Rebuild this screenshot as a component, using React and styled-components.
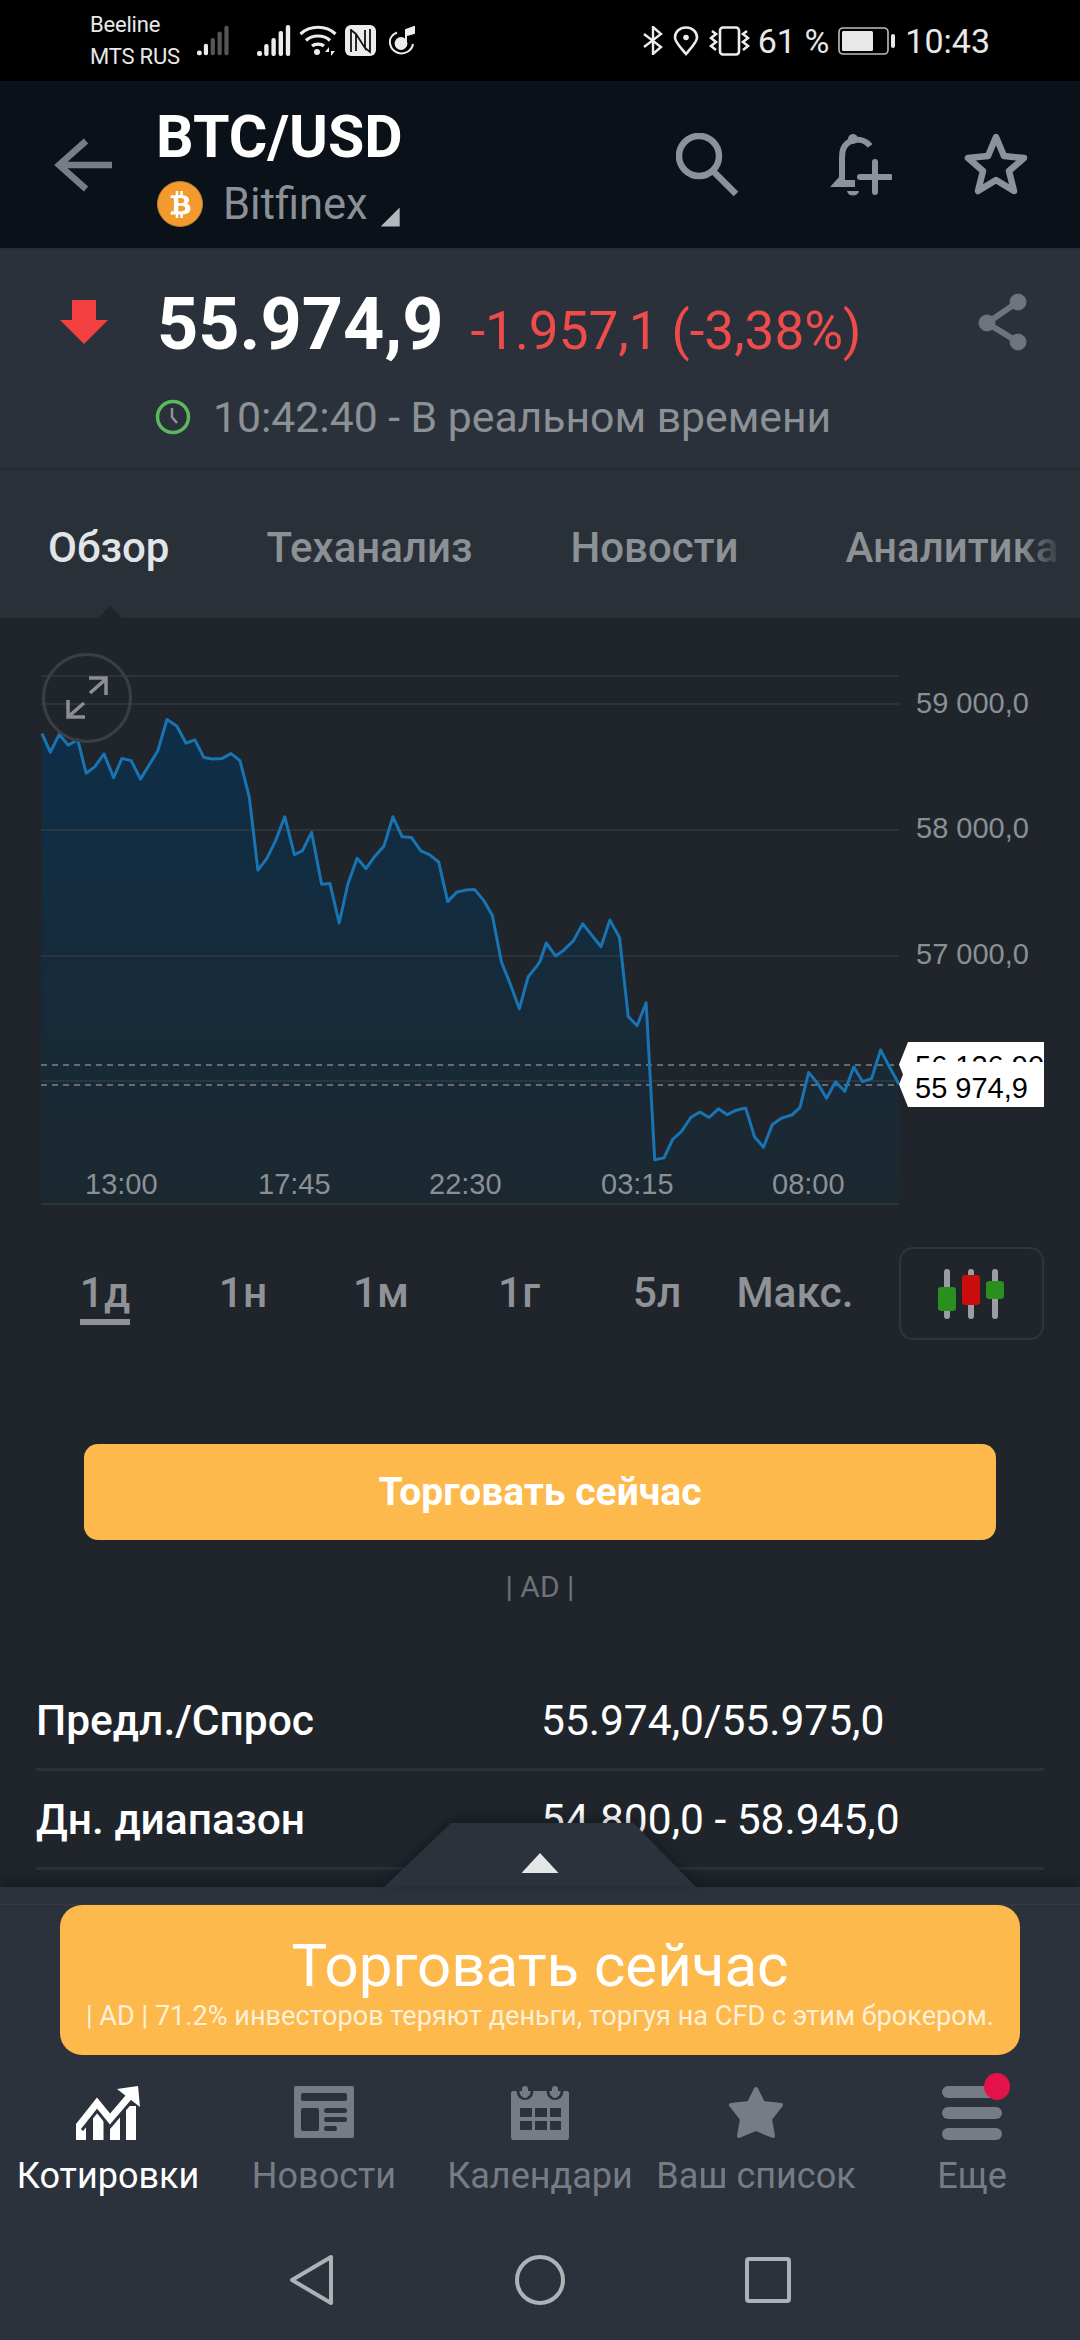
import React from 'react';
import styled, { createGlobalStyle } from 'styled-components';
import { FaBtc } from 'react-icons/fa';

const GlobalStyle = createGlobalStyle`
  html, body {
    margin: 0;
    padding: 0;
    background: #1f252b;
  }
  * {
    box-sizing: border-box;
  }
`;

const Page = styled.div`
  width: 1080px;
  height: 2340px;
  display: flex;
  flex-direction: column;
  overflow: hidden;
  font-family: Roboto, 'Noto Sans', sans-serif;
  background: #1f252b;
`;

/* status bar */
const StatusBar = styled.div`
  height: 81px;
  flex: none;
  display: flex;
  align-items: center;
  padding: 0 90px;
  background: #000;
  color: #e8e8e8;
`;

const Carriers = styled.div`
  width: 113px;
  font-size: 22px;
  line-height: 32px;
  letter-spacing: -0.2px;
`;

const StatusIcons = styled.div`
  display: flex;
  align-items: center;
  gap: ${(p) => p.$gap || 8}px;
  margin-left: ${(p) => p.$left || 0}px;
`;

const StatusText = styled.span`
  font-size: 34px;
  line-height: 40px;
  white-space: pre;
`;

const NoteSlot = styled.div`
  display: flex;
  margin-left: 5px;
`;

/* header */
const Header = styled.div`
  height: 169px;
  flex: none;
  display: flex;
  align-items: flex-start;
  background: #0b1118;
  border-bottom: 2px solid #262c34;
`;

const BackSlot = styled.div`
  width: 156px;
  padding: 56px 0 0 54px;
  flex: none;
`;

const TitleBlock = styled.div`
  width: 520px;
  flex: none;
  padding-top: 28px;
`;

const Title = styled.div`
  font-size: 59px;
  line-height: 56px;
  font-weight: 700;
  color: #fff;
`;

const SourceRow = styled.div`
  display: flex;
  align-items: center;
  height: 50px;
  margin-top: 14px;
  color: #8a9096;
  font-size: 43.5px;
`;

const Coin = styled.div`
  width: 46px;
  height: 46px;
  border-radius: 50%;
  display: flex;
  align-items: center;
  justify-content: center;
  margin: 0 20px 0 1px;
  background: #f29a2e;
  border: 1px solid #b8803e;
  color: #fff;
  font-size: 27px;
`;

const SourceCorner = styled.div`
  width: 19px;
  height: 19px;
  margin: 26px 0 0 13px;
  background: #b4b8bc;
  clip-path: polygon(100% 0, 100% 100%, 0 100%);
`;

const HeaderAction = styled.div`
  margin: 52px 0 0 ${(p) => p.$left || 0}px;
  flex: none;
  display: flex;
`;

/* quote */
const Quote = styled.div`
  height: 220px;
  flex: none;
  padding: 39px 50px 0 60px;
  background: #2b313a;
  border-bottom: 2px solid #262b33;
`;

const PriceRow = styled.div`
  display: flex;
  align-items: baseline;
`;

const DownArrow = styled.svg`
  align-self: flex-start;
  margin: 11px 49px 0 0;
  flex: none;
`;

const Price = styled.span`
  font-size: 72px;
  line-height: 72px;
  font-weight: 700;
  color: #fff;
`;

const Change = styled.span`
  margin-left: 27px;
  font-size: 53px;
  line-height: 72px;
  color: #ef4b4b;
`;

const ShareIcon = styled.svg`
  align-self: flex-start;
  margin: 4px 0 0 auto;
  flex: none;
`;

const TimeRow = styled.div`
  display: flex;
  align-items: center;
  margin: 25px 0 0 95px;
  height: 50px;
  gap: 22px;
  color: #8c9196;
  font-size: 42.7px;
`;

/* tabs */
const Tabs = styled.div`
  position: relative;
  height: 148px;
  flex: none;
  display: flex;
  align-items: center;
  padding: 6px 0 0 48px;
  overflow: hidden;
  white-space: nowrap;
  background: #2a3038;
`;

const Tab = styled.div`
  flex: none;
  margin-right: ${(p) => p.$gap}px;
  font-size: 42px;
  font-weight: 500;
  color: ${(p) => (p.$active ? '#e2e5e8' : '#8c9196')};
`;

const TabFade = styled.div`
  position: absolute;
  top: 0;
  bottom: 0;
  right: 0;
  width: 60px;
  background: linear-gradient(to right, rgba(42, 48, 56, 0), #2a3038 75%);
`;

const TabCaret = styled.div`
  position: absolute;
  left: 98px;
  bottom: 0;
  width: 24px;
  height: 12px;
  background: #1f252b;
  clip-path: polygon(50% 0, 100% 100%, 0 100%);
`;

/* scrolling content */
const Content = styled.div`
  flex: 1;
  min-height: 0;
  overflow: hidden;
`;

const Chart = styled.div`
  position: relative;
  width: 1080px;
  height: 602px;
`;

const ChartSvg = styled.svg`
  display: block;
`;

const ExpandButton = styled.div`
  position: absolute;
  left: 42px;
  top: 35px;
  width: 90px;
  height: 90px;
  border: 3px solid #3b3f44;
  border-radius: 50%;
  display: flex;
  align-items: center;
  justify-content: center;
`;

const AxisLabel = styled.span`
  position: absolute;
  left: ${(p) => p.$x}px;
  top: ${(p) => p.$y}px;
  font-family: 'Liberation Sans', Arial, sans-serif;
  font-size: 29px;
  line-height: 34px;
  color: #8b9095;
`;

const PriceTag = styled.div`
  position: absolute;
  left: 899px;
  top: ${(p) => p.$y}px;
  width: 145px;
  height: 45px;
  padding-left: 16px;
  overflow: hidden;
  white-space: nowrap;
  font-family: 'Liberation Sans', Arial, sans-serif;
  font-size: 29px;
  line-height: ${(p) => p.$line}px;
  color: #000;
  background: #fff;
  clip-path: polygon(0 50%, 9px 0, 100% 0, 100% 100%, 9px 100%);
`;

const RangeRow = styled.div`
  display: flex;
  align-items: center;
  height: 93px;
  margin-top: 27px;
  padding-left: 36px;
`;

const RangeItem = styled.div`
  width: 138px;
  flex: none;
  display: flex;
  justify-content: center;
  padding-top: 6px;
  font-size: 42.5px;
  font-weight: 500;
  color: #8f9397;
`;

const RangeLabel = styled.span`
  padding-bottom: 2px;
  border-bottom: 6px solid ${(p) => (p.$active ? '#8f9397' : 'transparent')};
`;

const CandleButton = styled.div`
  width: 145px;
  height: 93px;
  margin-left: 35px;
  flex: none;
  display: flex;
  align-items: center;
  justify-content: center;
  border: 2px solid #2e353d;
  border-radius: 14px;
`;

const TradeButton = styled.div`
  height: 96px;
  margin: 104px 84px 0;
  display: flex;
  align-items: center;
  justify-content: center;
  border-radius: 14px;
  background: #fdb94b;
  color: #fff;
  font-size: 39px;
  font-weight: 700;
`;

const AdLabel = styled.div`
  margin-top: 30px;
  text-align: center;
  font-size: 30px;
  line-height: 34px;
  color: #6c7278;
`;

const InfoList = styled.div`
  margin: 68px 36px 0;
`;

const InfoRow = styled.div`
  display: flex;
  align-items: center;
  height: 99px;
  border-bottom: 3px solid #2b3238;
  font-size: 42.5px;
  color: #fff;
`;

const InfoName = styled.div`
  width: 505px;
  font-weight: 500;
`;

const InfoValue = styled.div`
  font-weight: 400;
`;

/* bottom panel */
const Panel = styled.div`
  position: relative;
  height: 453px;
  flex: none;
  background: #2b323b;
  box-shadow: 0 -6px 12px rgba(0, 0, 0, 0.25);
`;

const PanelStrip = styled.div`
  height: 18px;
  border-bottom: 1px solid #343b45;
`;

const PullTabShadow = styled.div`
  position: absolute;
  left: 384px;
  top: -64px;
  width: 312px;
  height: 64px;
  filter: drop-shadow(0 -3px 6px rgba(0, 0, 0, 0.3));
`;

const PullTab = styled.div`
  width: 100%;
  height: 100%;
  display: flex;
  justify-content: center;
  padding-top: 30px;
  background: #2b323b;
  clip-path: polygon(21.5% 0, 80% 0, 100% 100%, 0 100%);
`;

const PullCaret = styled.div`
  width: 37px;
  height: 20px;
  background: #e4e6e8;
  clip-path: polygon(50% 0, 100% 100%, 0 100%);
`;

const Banner = styled.div`
  height: 150px;
  margin: 0 60px;
  display: flex;
  flex-direction: column;
  align-items: center;
  border-radius: 22px;
  background: #fdb94b;
  color: #fff;
`;

const BannerTitle = styled.div`
  margin-top: 27px;
  font-size: 60px;
  line-height: 68px;
`;

const BannerNote = styled.div`
  margin-top: -1px;
  font-size: 27.1px;
  line-height: 34px;
  color: #fff0d8;
  white-space: nowrap;
`;

const NavBar = styled.div`
  height: 170px;
  display: grid;
  grid-template-columns: repeat(5, 216px);
  padding-top: 31px;
`;

const NavItem = styled.div`
  position: relative;
  display: flex;
  flex-direction: column;
  align-items: center;
  color: ${(p) => (p.$active ? '#fff' : '#767c84')};
  font-size: 36px;
  white-space: nowrap;
`;

const NavIcon = styled.div`
  position: relative;
  height: 57px;
  display: flex;
  align-items: flex-start;
`;

const NavLabel = styled.div`
  margin-top: 11px;
  line-height: 44px;
`;

const RedDot = styled.div`
  position: absolute;
  right: -8px;
  top: -13px;
  width: 26px;
  height: 27px;
  border-radius: 50%;
  background: #e5124a;
`;

const MenuBars = styled.div`
  width: 60px;
  display: flex;
  flex-direction: column;
  gap: 9px;
`;

const MenuBar = styled.div`
  height: 12px;
  border-radius: 6px;
  background: #767c84;
`;

const SystemNav = styled.div`
  height: 115px;
  display: flex;
  align-items: center;
  justify-content: center;
  gap: 180px;
  padding-bottom: 6px;
`;

/* drawings */
const Signal = ({ weak }) => {
  const bars = [5, 12, 18, 25, 31];
  return (
    <svg width="34" height="31" viewBox="0 0 34 31">
      {bars.map((h, i) => (
        <rect
          key={i}
          x={i * 7.2}
          y={31 - h}
          width={i === 0 ? 5 : 4.4}
          height={h}
          rx="2"
          fill={weak && i > 1 ? '#565656' : '#ececec'}
        />
      ))}
    </svg>
  );
};

const Wifi = () => (
  <svg width="38" height="31" viewBox="0 0 38 31" fill="none" stroke="#ececec" strokeWidth="3.2">
    <path d="M1.5 9 C11 0 27 0 36.5 9" />
    <path d="M7 15.5 C13 9.5 25 9.5 31 15.5" />
    <path d="M13 21 C16 18.5 22 18.5 25 21" />
    <circle cx="18" cy="27" r="3" fill="#ececec" stroke="none" />
    <path d="M30 22 L26 27 H30 Z M32 31 L36 26 H32 Z" fill="#ececec" stroke="none" />
  </svg>
);

const Nfc = () => (
  <svg width="31" height="31" viewBox="0 0 31 31">
    <rect width="31" height="31" rx="6" fill="#ececec" />
    <path d="M6 4 V27 M6 5 L11 9 V26 M11 9 L20 23 V5 M20 23 L25 27 V4" fill="none" stroke="#111" strokeWidth="1.8" />
  </svg>
);

const NoteIcon = () => (
  <svg width="26" height="29" viewBox="0 0 26 29" fill="none" stroke="#ececec">
    <path d="M8 6.5 C2 9 0 14 1.2 18.5 C3 26 12 30 19 25.5 C22 23.5 23.5 21 24 18" strokeWidth="2" />
    <circle cx="12" cy="17.5" r="6.4" fill="#ececec" stroke="none" />
    <path d="M17 17 V4 L25 1 V7 L18 9" fill="#ececec" stroke="#ececec" strokeWidth="2" />
  </svg>
);

const Bluetooth = () => (
  <svg width="20" height="29" viewBox="0 0 20 29" fill="none" stroke="#ececec" strokeWidth="2.4">
    <path d="M1 8 L18 21 L10 28 V1 L18 8 L1 21" />
  </svg>
);

const Pin = () => (
  <svg width="26" height="30" viewBox="0 0 26 30" fill="none" stroke="#ececec" strokeWidth="2.6">
    <path d="M13 28 C7 21 2 16 2 11.5 C2 5.5 7 1.5 13 1.5 C19 1.5 24 5.5 24 11.5 C24 16 19 21 13 28 Z" />
    <circle cx="13" cy="11.5" r="2.8" fill="#ececec" stroke="none" />
  </svg>
);

const Vibrate = () => (
  <svg width="41" height="30" viewBox="0 0 41 30" fill="none" stroke="#ececec" strokeWidth="2.6">
    <rect x="11" y="1.5" width="19" height="27" rx="3" />
    <path d="M3 5 L7 8 L2 12 L7 16 L2 20 L7 24 M38 5 L34 8 L39 12 L34 16 L39 20 L34 24" />
  </svg>
);

const Battery = () => (
  <svg width="58" height="28" viewBox="0 0 58 28">
    <rect x="1" y="1" width="49" height="26" rx="4" fill="none" stroke="#bdbdbd" strokeWidth="1.6" />
    <rect x="4" y="4" width="31" height="20" rx="1.5" fill="#e8e8e8" />
    <rect x="53" y="7" width="4" height="14" rx="2" fill="#e8e8e8" />
  </svg>
);

const BackArrow = () => (
  <svg width="60" height="56" viewBox="0 0 60 56" fill="none" stroke="#767d85" strokeWidth="6.5">
    <path d="M58 28 H5 M32 4 L5 28 L32 52" />
  </svg>
);

const Search = () => (
  <svg width="64" height="64" viewBox="0 0 64 64" fill="none" stroke="#8b9299" strokeWidth="6.5">
    <circle cx="23" cy="23" r="20" />
    <path d="M37 38 L60 61" />
  </svg>
);

const BellPlus = () => (
  <svg width="64" height="64" viewBox="0 0 64 64" fill="none" stroke="#8b9299">
    <path d="M42 13 C37 6 27 5 21 9 C15 13 14 18 14 25 V48" strokeWidth="6" />
    <circle cx="25" cy="6" r="5" fill="#8b9299" stroke="none" />
    <path d="M12 43 L2 54 H27 V47 H15 Z" fill="#8b9299" stroke="none" />
    <path d="M19 58 H31 C30 64 20 64 19 58 Z" fill="#8b9299" stroke="none" />
    <path d="M32 44 H62 M47 29 V59" strokeWidth="6" strokeLinecap="round" />
  </svg>
);

const StarOutline = () => (
  <svg width="64" height="62" viewBox="0 0 64 62" fill="none" stroke="#8b9299" strokeWidth="6.5" strokeLinejoin="round">
    <path d="M32 4 L40 23 L60 25 L45 38 L50 58 L32 47 L14 58 L19 38 L4 25 L24 23 Z" />
  </svg>
);

const Clock = () => (
  <svg width="36" height="36" viewBox="0 0 36 36" fill="none" stroke="#5cb85c">
    <circle cx="18" cy="18" r="15.5" strokeWidth="3.5" />
    <path d="M17 9 V18 L22 24" stroke="#8c9196" strokeWidth="2.5" />
  </svg>
);

const ExpandIcon = () => (
  <svg width="44" height="44" viewBox="0 0 44 44" fill="none" stroke="#8c8f92" strokeWidth="3.5">
    <path d="M25 17 L41 3 M24 2 H41 V19" />
    <path d="M19 27 L3 41 M3 24 V41 H20" />
  </svg>
);

const Candles = () => (
  <svg width="68" height="50" viewBox="0 0 68 50">
    <rect x="6" y="0" width="6" height="50" rx="3" fill="#9a9ea2" />
    <rect x="30" y="0" width="6" height="50" rx="3" fill="#9a9ea2" />
    <rect x="54" y="0" width="6" height="50" rx="3" fill="#9a9ea2" />
    <rect x="0" y="18" width="18" height="24" rx="3" fill="#2a8f1e" />
    <rect x="24" y="6" width="18" height="30" rx="3" fill="#c90d0d" />
    <rect x="48" y="12" width="18" height="18" rx="3" fill="#2a8f1e" />
  </svg>
);

const QuotesIcon = () => (
  <svg width="64" height="54" viewBox="0 0 64 54">
    <path d="M0 54 V40 L10 28 V54 Z M17 54 V22 L27.5 30 V54 Z M34 54 V36 L44 22 V54 Z M50 54 V20 H60 V54 Z" fill="#fff" />
    <path d="M2 41 L21 17 L34 33 L52 12" fill="none" stroke="#2b323b" strokeWidth="13" />
    <path d="M2 41 L21 17 L34 33 L52 12" fill="none" stroke="#fff" strokeWidth="7" strokeLinecap="round" />
    <path d="M41 3 L62 0 L64 21 Z" fill="#fff" />
  </svg>
);

const NewsIcon = () => (
  <svg width="60" height="52" viewBox="0 0 60 52">
    <rect width="60" height="52" rx="2" fill="#767c84" />
    <g fill="#2b323b">
      <rect x="7" y="7" width="46" height="8" rx="2" />
      <rect x="7" y="22" width="18" height="23" rx="2" />
      <rect x="30" y="22" width="23" height="5" rx="2.5" />
      <rect x="30" y="31" width="23" height="5" rx="2.5" />
      <rect x="30" y="40" width="13" height="5" rx="2.5" />
    </g>
  </svg>
);

const CalendarIcon = () => (
  <svg width="58" height="54" viewBox="0 0 58 54">
    <path d="M2 5 H56 C57 5 58 6 58 7 V52 C58 53 57 54 56 54 H2 C1 54 0 53 0 52 V7 C0 6 1 5 2 5 Z" fill="#767c84" />
    <path d="M7 5 C7 15 21 15 21 5 M37 5 C37 15 51 15 51 5" fill="none" stroke="#2b323b" strokeWidth="3" />
    <g fill="#767c84">
      <rect x="11" y="0" width="6" height="12" rx="3" />
      <rect x="41" y="0" width="6" height="12" rx="3" />
    </g>
    <g fill="#2b323b">
      <rect x="9" y="22" width="12" height="9" />
      <rect x="24" y="22" width="12" height="9" />
      <rect x="39" y="22" width="11" height="9" />
      <rect x="9" y="35" width="12" height="9" />
      <rect x="24" y="35" width="12" height="9" />
      <rect x="39" y="35" width="11" height="9" />
    </g>
  </svg>
);

const StarIcon = () => (
  <svg width="56" height="54" viewBox="0 0 56 54">
    <path
      d="M28 3 L35 17 L53 19 L42 33 L45 50 L28 43 L11 50 L14 33 L3 19 L21 17 Z"
      fill="#767c84"
      stroke="#767c84"
      strokeWidth="4"
      strokeLinejoin="round"
    />
  </svg>
);

const BackKey = () => (
  <svg width="46" height="52" viewBox="0 0 46 52" fill="none" stroke="#aeb1b5" strokeWidth="4" strokeLinejoin="round">
    <path d="M42 3 L3 26 L42 49 Z" />
  </svg>
);

const HomeKey = () => (
  <svg width="50" height="50" viewBox="0 0 50 50" fill="none" stroke="#aeb1b5" strokeWidth="4">
    <circle cx="25" cy="25" r="23" />
  </svg>
);

const RecentKey = () => (
  <svg width="46" height="46" viewBox="0 0 46 46" fill="none" stroke="#aeb1b5" strokeWidth="4" strokeLinejoin="round">
    <rect x="2" y="2" width="42" height="42" rx="2" />
  </svg>
);

// line traced off the picture, two stretches
const left = [
  [122, 253], [146, 303], [172, 255], [198, 284], [226, 270], [250, 360], [275, 343], [302, 308], [330, 372],
  [354, 320], [381, 326], [408, 376], [458, 300], [485, 215], [514, 233], [540, 279], [566, 270], [592, 318],
  [618, 322], [645, 320], [671, 307], [697, 326], [724, 425], [749, 622], [775, 590], [800, 543], [827, 478],
  [855, 580], [878, 570], [905, 520], [934, 660], [958, 658], [985, 765], [1010, 660], [1037, 590], [1063, 618],
  [1088, 585], [1115, 557], [1141, 478], [1168, 532], [1195, 534], [1222, 570], [1247, 580], [1274, 600],
  [1300, 707], [1326, 682], [1352, 676], [1378, 674], [1404, 703], [1430, 745], [1456, 870], [1482, 930],
  [1508, 997], [1534, 910], [1560, 880],
].map(([x, y]) => [x / 2.904, 640 + y / 2.703]);

const right = [
  [0, 700], [18, 660], [45, 688], [70, 675], [97, 655], [124, 618], [150, 643], [177, 668], [203, 610], [231, 648],
  [256, 820], [282, 840], [308, 790], [333, 1132], [360, 1128], [385, 1088], [411, 1070], [438, 1040], [464, 1028],
  [491, 1040], [518, 1021], [544, 1034], [570, 1024], [597, 1019], [623, 1082], [649, 1105], [675, 1055], [700, 1042],
  [733, 1034], [755, 1018], [780, 942], [806, 965], [832, 998], [858, 962], [885, 983], [911, 930], [937, 962],
  [963, 955], [989, 893], [1015, 930], [1042, 967],
].map(([x, y]) => [540 + x / 2.904, 640 + y / 2.178]);

const linePoints = [...left, ...right].map(([x, y]) => `${x.toFixed(1)},${y.toFixed(1)}`);
const linePath = `M${linePoints.join(' L')}`;
const areaPath = `${linePath} L899,1204 L41,1204 Z`;

const gridLines = [676, 704, 830, 956, 1081, 1204];
const priceLabels = [
  ['59 000,0', 703],
  ['58 000,0', 828],
  ['57 000,0', 954],
];
const timeLabels = [
  ['13:00', 85],
  ['17:45', 258],
  ['22:30', 429],
  ['03:15', 601],
  ['08:00', 772],
];
const ranges = ['1д', '1н', '1м', '1г', '5л', 'Макс.'];
const tabs = [
  ['Обзор', 97, true],
  ['Теханализ', 98, false],
  ['Новости', 107, false],
  ['Аналитика', 0, false],
];

const App = () => {
  return (
    <Page>
      <GlobalStyle />
      <StatusBar>
        <Carriers>
          <div>Beeline</div>
          <div>MTS RUS</div>
        </Carriers>
        <Signal weak />
        <StatusIcons $left={27}>
          <Signal />
          <Wifi />
          <Nfc />
          <NoteSlot>
            <NoteIcon />
          </NoteSlot>
        </StatusIcons>
        <StatusIcons $left={228} $gap={10}>
          <Bluetooth />
          <Pin />
          <Vibrate />
        </StatusIcons>
        <StatusIcons $left={8} $gap={9}>
          <StatusText>61 %</StatusText>
          <Battery />
          <StatusText>10:43</StatusText>
        </StatusIcons>
      </StatusBar>

      <Header>
        <BackSlot>
          <BackArrow />
        </BackSlot>
        <TitleBlock>
          <Title>BTC/USD</Title>
          <SourceRow>
            <Coin>
              <FaBtc />
            </Coin>
            Bitfinex
            <SourceCorner />
          </SourceRow>
        </TitleBlock>
        <HeaderAction>
          <Search />
        </HeaderAction>
        <HeaderAction $left={88}>
          <BellPlus />
        </HeaderAction>
        <HeaderAction $left={72}>
          <StarOutline />
        </HeaderAction>
      </Header>

      <Quote>
        <PriceRow>
          <DownArrow width="48" height="44" viewBox="0 0 48 44">
            <path d="M12 0 H36 V20 H48 L24 44 L0 20 H12 Z" fill="#f44040" />
          </DownArrow>
          <Price>55.974,9</Price>
          <Change>-1.957,1 (-3,38%)</Change>
          <ShareIcon width="54" height="58" viewBox="0 0 54 58" fill="#6e747c" stroke="#6e747c">
            <path d="M42 9 L11 30 L42 49" fill="none" strokeWidth="6" />
            <circle cx="42" cy="9" r="8" />
            <circle cx="11" cy="30" r="8" />
            <circle cx="42" cy="49" r="8" />
          </ShareIcon>
        </PriceRow>
        <TimeRow>
          <Clock />
          10:42:40 - В реальном времени
        </TimeRow>
      </Quote>

      <Tabs>
        {tabs.map(([name, gap, active]) => (
          <Tab key={name} $gap={gap} $active={active}>
            {name}
          </Tab>
        ))}
        <TabFade />
        <TabCaret />
      </Tabs>

      <Content>
        <Chart>
          <ChartSvg width="1080" height="602" viewBox="0 618 1080 602">
            <defs>
              <linearGradient id="area" x1="0" y1="0" x2="0" y2="1">
                <stop offset="0" stopColor="#0e2e48" />
                <stop offset="1" stopColor="#1c2830" />
              </linearGradient>
            </defs>
            <path d={areaPath} fill="url(#area)" />
            {gridLines.map((y) => (
              <line key={y} x1="41" x2="899" y1={y} y2={y} stroke="#333a41" strokeWidth="1.5" />
            ))}
            <line x1="41" x2="899" y1="1065" y2="1065" stroke="#7d8489" strokeWidth="1.5" strokeDasharray="6 5" />
            <line x1="41" x2="899" y1="1085" y2="1085" stroke="#7d8489" strokeWidth="1.5" strokeDasharray="6 5" />
            <path d={linePath} fill="none" stroke="#1874b3" strokeWidth="3" strokeLinejoin="round" />
          </ChartSvg>
          <ExpandButton>
            <ExpandIcon />
          </ExpandButton>
          {priceLabels.map(([text, y]) => (
            <AxisLabel key={text} $x={916} $y={y - 618 - 17}>
              {text}
            </AxisLabel>
          ))}
          {timeLabels.map(([text, x]) => (
            <AxisLabel key={text} $x={x} $y={549}>
              {text}
            </AxisLabel>
          ))}
          <PriceTag $y={424} $line={48}>
            56 126,90
          </PriceTag>
          <PriceTag $y={444} $line={52}>
            55 974,9
          </PriceTag>
        </Chart>

        <RangeRow>
          {ranges.map((r, i) => (
            <RangeItem key={r}>
              <RangeLabel $active={i === 0}>{r}</RangeLabel>
            </RangeItem>
          ))}
          <CandleButton>
            <Candles />
          </CandleButton>
        </RangeRow>

        <TradeButton>Торговать сейчас</TradeButton>
        <AdLabel>| AD |</AdLabel>

        <InfoList>
          <InfoRow>
            <InfoName>Предл./Спрос</InfoName>
            <InfoValue>55.974,0/55.975,0</InfoValue>
          </InfoRow>
          <InfoRow>
            <InfoName>Дн. диапазон</InfoName>
            <InfoValue>54.800,0 - 58.945,0</InfoValue>
          </InfoRow>
        </InfoList>
      </Content>

      <Panel>
        <PullTabShadow>
          <PullTab>
            <PullCaret />
          </PullTab>
        </PullTabShadow>
        <PanelStrip />
        <Banner>
          <BannerTitle>Торговать сейчас</BannerTitle>
          <BannerNote>| AD | 71.2% инвесторов теряют деньги, торгуя на CFD с этим брокером.</BannerNote>
        </Banner>
        <NavBar>
          <NavItem $active>
            <NavIcon>
              <QuotesIcon />
            </NavIcon>
            <NavLabel>Котировки</NavLabel>
          </NavItem>
          <NavItem>
            <NavIcon>
              <NewsIcon />
            </NavIcon>
            <NavLabel>Новости</NavLabel>
          </NavItem>
          <NavItem>
            <NavIcon>
              <CalendarIcon />
            </NavIcon>
            <NavLabel>Календари</NavLabel>
          </NavItem>
          <NavItem>
            <NavIcon>
              <StarIcon />
            </NavIcon>
            <NavLabel>Ваш список</NavLabel>
          </NavItem>
          <NavItem>
            <NavIcon>
              <MenuBars>
                <MenuBar />
                <MenuBar />
                <MenuBar />
              </MenuBars>
              <RedDot />
            </NavIcon>
            <NavLabel>Еще</NavLabel>
          </NavItem>
        </NavBar>
        <SystemNav>
          <BackKey />
          <HomeKey />
          <RecentKey />
        </SystemNav>
      </Panel>
    </Page>
  );
};

export default App;
